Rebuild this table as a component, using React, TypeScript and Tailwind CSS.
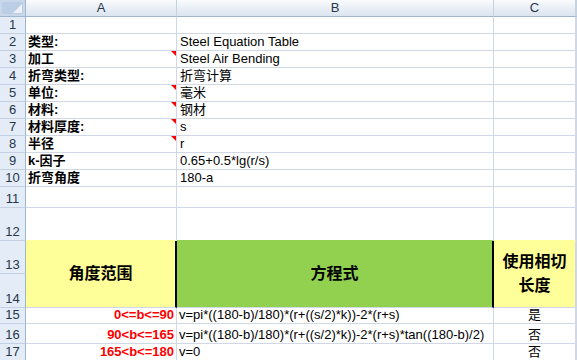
import React from "react";

type Row = { n: number; a: string; b: string; mark?: boolean };

const infoRows: Row[] = [
  { n: 1, a: "", b: "" },
  { n: 2, a: "类型:", b: "Steel Equation Table" },
  { n: 3, a: "加工", b: "Steel Air Bending", mark: true },
  { n: 4, a: "折弯类型:", b: "折弯计算" },
  { n: 5, a: "单位:", b: "毫米", mark: true },
  { n: 6, a: "材料:", b: "钢材", mark: true },
  { n: 7, a: "材料厚度:", b: "s", mark: true },
  { n: 8, a: "半径", b: "r", mark: true },
  { n: 9, a: "k-因子", b: "0.65+0.5*lg(r/s)" },
  { n: 10, a: "折弯角度", b: "180-a" },
];

const rangeRows = [
  { n: 15, a: "0<=b<=90", b: "v=pi*((180-b)/180)*(r+((s/2)*k))-2*(r+s)", c: "是" },
  { n: 16, a: "90<b<=165", b: "v=pi*((180-b)/180)*(r+((s/2)*k))-2*(r+s)*tan((180-b)/2)", c: "否" },
  { n: 17, a: "165<b<=180", b: "v=0", c: "否" },
];

const rowHead =
  "flex items-end justify-center bg-[#e4ecf7] border-r border-r-[#9eb6ce] border-b border-b-[#c3d1e2] text-[13px] leading-[16px] text-[#27364a]";
const cell =
  "relative flex items-end whitespace-nowrap border-r border-b border-[#d0d7e5] text-[13px] leading-[16px]";
const colHead =
  "flex items-center justify-center bg-linear-to-b from-[#f9fbfd] to-[#dbe4f0] border-r border-r-[#c5d2e0] border-b border-b-[#9eb6ce] text-[13px] text-[#27364a]";

const CommentMark = () => (
  <span className="absolute top-0 right-0 h-0 w-0 border-l-[5px] border-t-[5px] border-l-transparent border-t-[#ff0000]" />
);

const App = () => {
  return (
    <div
      className="h-[360px] w-[577px] overflow-hidden bg-white text-black"
      style={{ fontFamily: '"Liberation Sans", "Noto Sans CJK SC", sans-serif' }}
    >
      <div className="grid grid-cols-[26px_151px_317px_82px_1fr] grid-rows-[17px_repeat(10,17px)_21px_33px_33px_34px_16px_20px_17px]">
        {/* column headers */}
        <div className="relative bg-[#bccde6] border-r border-r-[#9eb6ce] border-b border-b-[#9eb6ce]">
          <svg className="absolute inset-0" width="25" height="16" viewBox="0 0 25 16">
            <rect x="1" y="1" width="23" height="14" fill="none" stroke="#d6e1f0" />
            <polygon points="22,4 22,13 13,13" fill="#eef2f7" />
          </svg>
        </div>
        <div className={colHead}>A</div>
        <div className={colHead}>B</div>
        <div className={colHead}>C</div>
        <div className={colHead} />

        {infoRows.map((r) => (
          <React.Fragment key={r.n}>
            <div className={rowHead}>{r.n}</div>
            <div className={`${cell} pl-[2px] font-bold`}>
              {r.a}
              {r.mark && <CommentMark />}
            </div>
            <div className={`${cell} pl-[3px]`}>{r.b}</div>
            <div className={cell} />
            <div className={cell} />
          </React.Fragment>
        ))}

        {/* row 11 */}
        <div className={rowHead}>11</div>
        <div className={cell} />
        <div className={cell} />
        <div className={cell} />
        <div className={cell} />

        {/* row 12 */}
        <div className={rowHead}>12</div>
        <div className={`${cell} border-b-[#ffff99]`} />
        <div className={`${cell} border-b-[#92d050]`} />
        <div className={`${cell} border-b-[#ffff99]`} />
        <div className={cell} />

        {/* rows 13-14, merged headings */}
        <div className={rowHead}>13</div>
        <div className="row-span-2 flex items-center justify-center border-b border-r-2 border-b-[#d0d7e5] border-r-black bg-[#ffff99] text-[16px] font-bold">
          角度范围
        </div>
        <div className="row-span-2 flex items-center justify-center border-b border-r-2 border-b-[#d0d7e5] border-r-black bg-[#92d050] text-[16px] font-bold">
          方程式
        </div>
        <div className="row-span-2 flex items-center justify-center border-r border-b border-[#d0d7e5] bg-[#ffff99] text-center text-[16px] font-bold leading-[24px]">
          使用相切
          <br />
          长度
        </div>
        <div className={cell} />
        <div className={rowHead}>14</div>
        <div className={cell} />

        {rangeRows.map((r) => (
          <React.Fragment key={r.n}>
            <div className={rowHead}>{r.n}</div>
            <div className={`${cell} justify-end pr-[2px] font-bold text-[#ff0000]`}>{r.a}</div>
            <div className={`${cell} pl-[2px]`}>{r.b}</div>
            <div className={`${cell} justify-center`}>{r.c}</div>
            <div className={cell} />
          </React.Fragment>
        ))}
      </div>
    </div>
  );
};

export default App;
